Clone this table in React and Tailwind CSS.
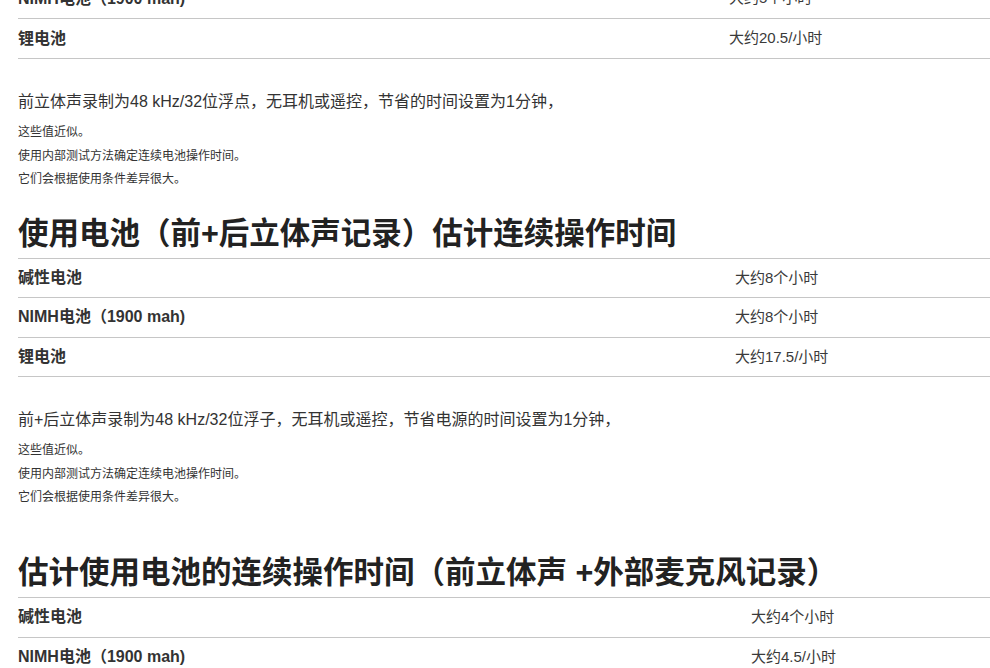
import React from "react";

const font = { fontFamily: '"Liberation Sans", "Noto Sans CJK SC", sans-serif' };

function Row({ label, value, col, h = "h-[39.5px]" }) {
  return (
    <div className={`flex ${h} items-center border-b border-[#c6c6c6]`}>
      <div className={`${col} shrink-0 text-[16px] font-bold text-[#333]`}>{label}</div>
      <div className="text-[15px] text-[#3a3a3a]">{value}</div>
    </div>
  );
}

function Notes({ lead }) {
  return (
    <div className="mt-[31px]">
      <p className="text-[16px] leading-[24px] text-[#333]">{lead}</p>
      <div className="mt-[7px] text-[12px] leading-[23.5px] text-[#333]">
        <p>这些值近似。</p>
        <p>使用内部测试方法确定连续电池操作时间。</p>
        <p>它们会根据使用条件差异很大。</p>
      </div>
    </div>
  );
}

export default function App() {
  return (
    <div className="min-h-screen w-full overflow-hidden bg-white" style={font}>
      <div className="w-[1010px] pl-[18px]">
        <div className="-mt-[21px]">
          <Row h="h-[40px]" col="w-[711px]" label="NIMH电池（1900 mah)" value="大约5个小时" />
          <Row h="h-[40px]" col="w-[711px]" label="锂电池" value="大约20.5/小时" />
        </div>
        <Notes lead="前立体声录制为48 kHz/32位浮点，无耳机或遥控，节省的时间设置为1分钟，" />

        <h2 className="mt-[21px] text-[30.5px] font-bold leading-[40px] text-[#222]">
          使用电池（前+后立体声记录）估计连续操作时间
        </h2>
        <div className="mt-[5px] border-t border-[#c6c6c6]">
          <Row col="w-[717px]" label="碱性电池" value="大约8个小时" />
          <Row col="w-[717px]" label="NIMH电池（1900 mah)" value="大约8个小时" />
          <Row col="w-[717px]" label="锂电池" value="大约17.5/小时" />
        </div>
        <Notes lead="前+后立体声录制为48 kHz/32位浮子，无耳机或遥控，节省电源的时间设置为1分钟，" />

        <h2 className="mt-[42px] text-[30.5px] font-bold leading-[40px] text-[#222]">
          估计使用电池的连续操作时间（前立体声 +外部麦克风记录）
        </h2>
        <div className="mt-[5px] border-t border-[#c6c6c6]">
          <Row h="h-[40px]" col="w-[733px]" label="碱性电池" value="大约4个小时" />
          <Row h="h-[40px]" col="w-[733px]" label="NIMH电池（1900 mah)" value="大约4.5/小时" />
          <Row h="h-[40px]" col="w-[733px]" label="锂电池" value="大约10/小时" />
        </div>
      </div>
    </div>
  );
}
